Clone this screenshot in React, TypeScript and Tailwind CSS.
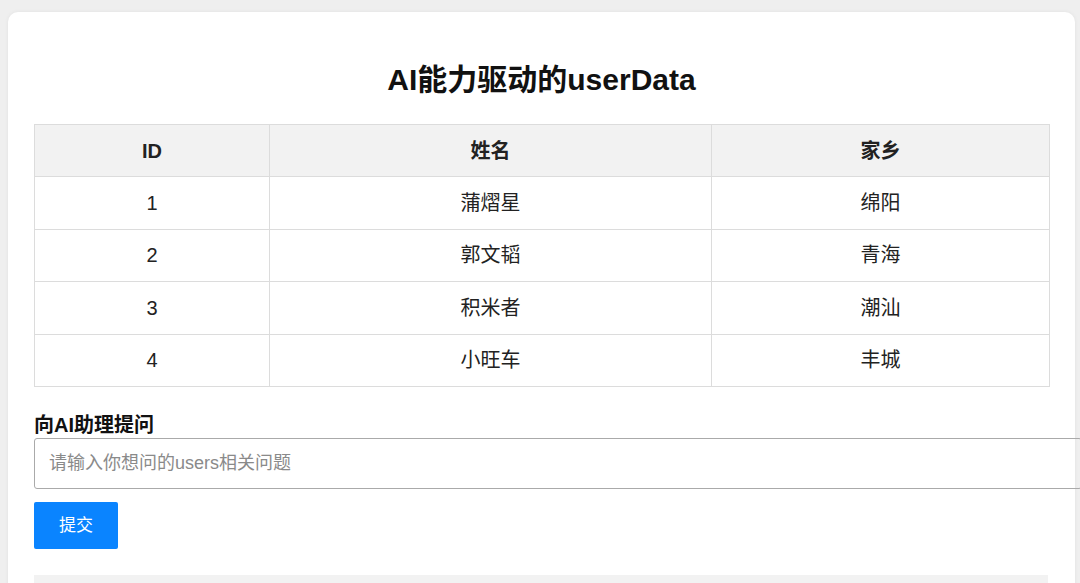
import React from "react";

const rows = [
  { id: 1, name: "蒲熠星", home: "绵阳" },
  { id: 2, name: "郭文韬", home: "青海" },
  { id: 3, name: "积米者", home: "潮汕" },
  { id: 4, name: "小旺车", home: "丰城" },
];

export default function App() {
  return (
    <div
      className="h-[583px] w-[1080px] overflow-hidden bg-[#efefef] pt-[12px] pl-[8px]"
      style={{ fontFamily: '"Liberation Sans", Arial, "Noto Sans CJK SC", sans-serif' }}
    >
      <div className="w-[1067px] min-h-[600px] rounded-[10px] bg-white px-[26px] pt-[48px] shadow-[0_0_4px_rgba(0,0,0,0.06)]">
        <h1 className="text-center text-[30px] font-bold leading-[40px] text-[#111]">AI能力驱动的userData</h1>
        <table className="mt-[24px] w-[1016px] border-collapse text-[20px] text-[#222]">
          <thead>
            <tr className="h-[52px] bg-[#f2f2f2]">
              <th className="w-[235px] border border-[#dcdcdc] font-bold">ID</th>
              <th className="w-[442px] border border-[#dcdcdc] font-bold">姓名</th>
              <th className="border border-[#dcdcdc] font-bold">家乡</th>
            </tr>
          </thead>
          <tbody>
            {rows.map((r) => (
              <tr key={r.id} className="h-[52.5px]">
                <td className="border border-[#dcdcdc] text-center">{r.id}</td>
                <td className="border border-[#dcdcdc] text-center">{r.name}</td>
                <td className="border border-[#dcdcdc] text-center">{r.home}</td>
              </tr>
            ))}
          </tbody>
        </table>
        <div className="mt-[25px] text-[20px] font-bold leading-[26px] text-[#111]">向AI助理提问</div>
        <input
          className="block h-[51px] w-[1048px] rounded-[3px] border border-[#aaa] px-[14px] text-[18px] placeholder:text-[#8a8a8a] outline-none"
          placeholder="请输入你想问的users相关问题"
        />
        <button className="mt-[13px] block h-[47px] w-[84px] rounded-[2px] bg-[#0a84ff] text-[17px] text-white">提交</button>
        <div className="mt-[26px] h-[40px] w-[1014px] bg-[#f2f2f2]" />
      </div>
    </div>
  );
}
